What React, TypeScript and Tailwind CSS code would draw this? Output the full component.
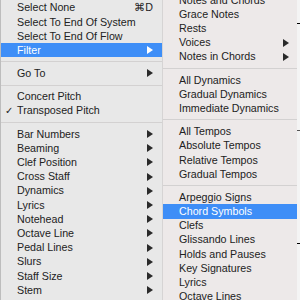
import React from "react";

type Item =
  | { kind: "sep" }
  | { kind: "item"; label: string; sub?: boolean; shortcut?: string; checked?: boolean; active?: boolean };

const leftMenu: Item[] = [
  { kind: "item", label: "Select None", shortcut: "⌘D" },
  { kind: "item", label: "Select To End Of System" },
  { kind: "item", label: "Select To End Of Flow" },
  { kind: "item", label: "Filter", sub: true, active: true },
  { kind: "sep" },
  { kind: "item", label: "Go To", sub: true },
  { kind: "sep" },
  { kind: "item", label: "Concert Pitch" },
  { kind: "item", label: "Transposed Pitch", checked: true },
  { kind: "sep" },
  { kind: "item", label: "Bar Numbers", sub: true },
  { kind: "item", label: "Beaming", sub: true },
  { kind: "item", label: "Clef Position", sub: true },
  { kind: "item", label: "Cross Staff", sub: true },
  { kind: "item", label: "Dynamics", sub: true },
  { kind: "item", label: "Lyrics", sub: true },
  { kind: "item", label: "Notehead", sub: true },
  { kind: "item", label: "Octave Line", sub: true },
  { kind: "item", label: "Pedal Lines", sub: true },
  { kind: "item", label: "Slurs", sub: true },
  { kind: "item", label: "Staff Size", sub: true },
  { kind: "item", label: "Stem", sub: true },
];

const filterMenu: Item[] = [
  { kind: "item", label: "Notes and Chords" },
  { kind: "item", label: "Grace Notes" },
  { kind: "item", label: "Rests" },
  { kind: "item", label: "Voices", sub: true },
  { kind: "item", label: "Notes in Chords", sub: true },
  { kind: "sep" },
  { kind: "item", label: "All Dynamics" },
  { kind: "item", label: "Gradual Dynamics" },
  { kind: "item", label: "Immediate Dynamics" },
  { kind: "sep" },
  { kind: "item", label: "All Tempos" },
  { kind: "item", label: "Absolute Tempos" },
  { kind: "item", label: "Relative Tempos" },
  { kind: "item", label: "Gradual Tempos" },
  { kind: "sep" },
  { kind: "item", label: "Arpeggio Signs" },
  { kind: "item", label: "Chord Symbols", active: true },
  { kind: "item", label: "Clefs" },
  { kind: "item", label: "Glissando Lines" },
  { kind: "item", label: "Holds and Pauses" },
  { kind: "item", label: "Key Signatures" },
  { kind: "item", label: "Lyrics" },
  { kind: "item", label: "Octave Lines" },
];

function Arrow({ white }: { white?: boolean }) {
  return (
    <svg width="6" height="8" viewBox="0 0 6 8" className="shrink-0">
      <path d="M0 0 L6 4 L0 8 Z" fill={white ? "#ffffff" : "#2a2a2a"} />
    </svg>
  );
}

function MenuRows({ items, arrowPad }: { items: Item[]; arrowPad: string }) {
  return (
    <>
      {items.map((it, i) =>
        it.kind === "sep" ? (
          <div key={i} className="h-[9px] flex items-center">
            <div className="w-full h-px bg-[#d3d1d1]" />
          </div>
        ) : (
          <div
            key={i}
            className={`h-[14.2px] flex items-center pl-[16px] ${arrowPad} relative ${
              it.active ? "bg-[#3e8ef7] text-white" : "text-[#222222]"
            }`}
          >
            {it.checked && <span className="absolute left-[4px] text-[10px] leading-none">✓</span>}
            <span className="flex-1 whitespace-nowrap leading-none">{it.label}</span>
            {it.shortcut && <span className="leading-none">{it.shortcut}</span>}
            {it.sub && <Arrow white={it.active} />}
          </div>
        )
      )}
    </>
  );
}

export default function App() {
  return (
    <div
      className="w-[300px] h-[300px] overflow-hidden flex bg-white text-[10.7px]"
      style={{ fontFamily: '"Liberation Sans", Arial, sans-serif' }}
    >
      <div className="w-px bg-[#bdbdbd] shrink-0" />
      <div className="w-[161px] shrink-0 bg-[#e8e8e8] flex flex-col pt-[0.6px]">
        <MenuRows items={leftMenu} arrowPad="pr-[9px]" />
      </div>
      <div className="w-[135px] shrink-0 bg-[#ede9e9] border-l border-[#d6d4d4] flex flex-col">
        <div className="mt-[-7.1px] flex flex-col">
          <MenuRows items={filterMenu} arrowPad="pr-[8px]" />
        </div>
      </div>
      <div className="flex-1 bg-[#f4f4f4] flex flex-col">
        <div className="h-[23px]" />
        <div className="h-px bg-black" />
        <div className="h-[106px]" />
        <div className="h-px bg-[#555]" />
        <div className="h-[112px]" />
        <div className="h-px bg-black" />
      </div>
    </div>
  );
}
